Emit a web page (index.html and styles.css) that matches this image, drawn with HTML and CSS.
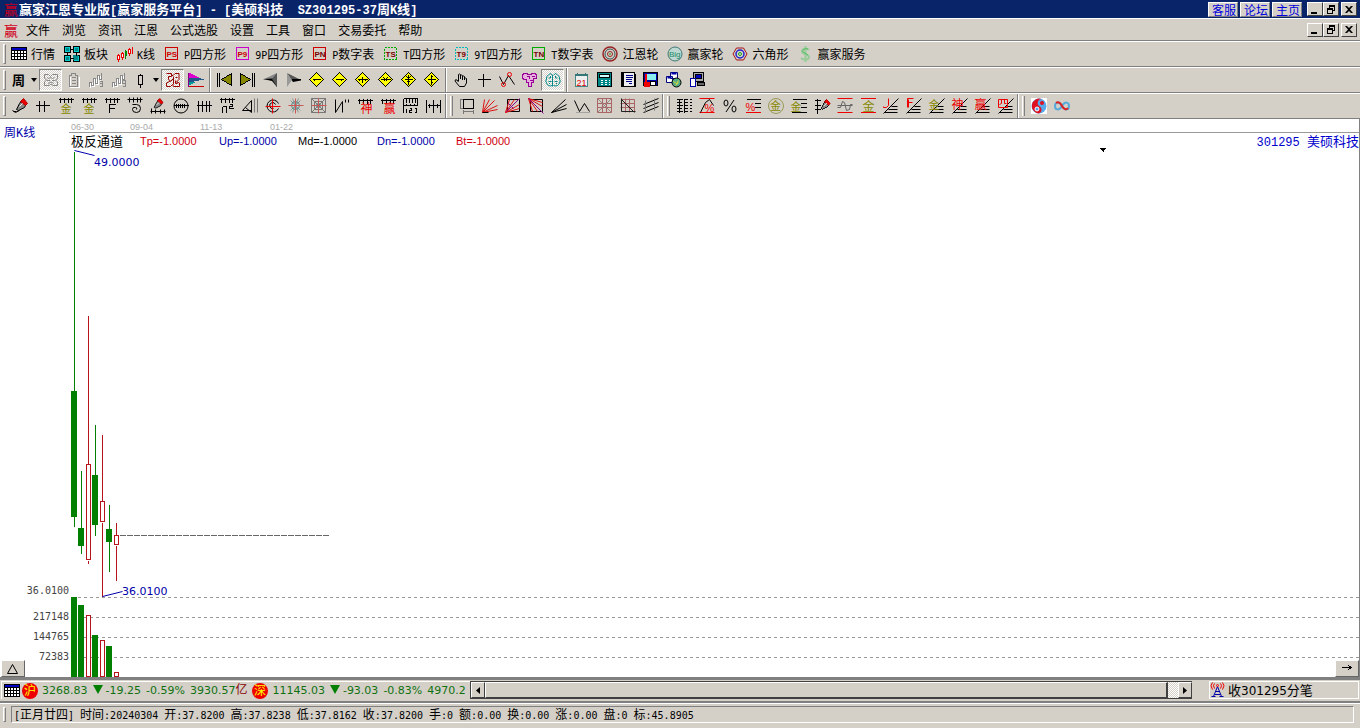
FILE: index.html
```
<!DOCTYPE html>
<html lang="zh-CN">
<head>
<meta charset="utf-8">
<title>赢家江恩专业版</title>
<link rel="stylesheet" href="styles.css">
</head>
<body>
<svg class="defs" aria-hidden="true">
  <symbol id="dia" viewBox="-.5 -.5 16 16"><path d="M7 0L14 7L7 14L0 7Z" fill="#ff0" stroke="#000"/></symbol>
  <symbol id="min" viewBox="0 0 12 11"><path d="M2 8h6v2H2z" fill="#000" stroke="none"/></symbol>
  <symbol id="res" viewBox="0 0 12 11"><path d="M4 1h6v2H4zM4 3h1v1H4zM9 3h1v4H7V6h2zM2 4h6v2H2zM2 6h1v4H2zM7 6h1v4H7zM2 9h6v1H2z" fill="#000" stroke="none"/></symbol>
  <symbol id="cls" viewBox="0 0 12 11"><path d="M2 2h2l2 2 2-2h2L7 5.500l3 3.500H8L6 7 4 9H2l3-3.500z" fill="#000" stroke="none"/></symbol>
  <symbol id="grid" viewBox="0 0 16 16"><path d="M0 1h16v13H0z" fill="#000" stroke="none"/><path d="M1 2h14v2H1z" fill="#0000c0" stroke="none"/><path d="M1 5h2v2H1zM4 5h2v2H4zM7 5h2v2H7zM10 5h2v2h-2zM13 5h2v2h-2zM1 8h2v2H1zM4 8h2v2H4zM7 8h2v2H7zM10 8h2v2h-2zM13 8h2v2h-2zM1 11h2v2H1zM4 11h2v2H4zM7 11h2v2H7zM10 11h2v2h-2zM13 11h2v2h-2z" fill="#fff" stroke="none"/></symbol>
  <symbol id="fan" viewBox="-.5 -.5 16 16"><path d="M0 15L15 0M1 14h13M5 11h9M8 8h6" stroke="#000"/></symbol>
  <symbol id="comb" viewBox="-.5 -.5 16 16"><path d="M0 3h15M2 1v5M6 1v5M10 1v5M13 1v5" stroke="#000"/></symbol>
  <symbol id="pen" viewBox="-.5 -.5 16 16"><path d="M7 5L10 1L14 5L12 9L6 12L4 11Z" fill="#888" stroke="#000"/><path d="M8 3L11 0L15 5L13 7Z" fill="#e00" stroke="#a00"/><path d="M7 8l3-3" stroke="#eee"/></symbol>
</svg>

<header class="title">
  <svg class="i" viewBox="0 0 16 16"><text class="ct" x="1" y="14" font-size="14" fill="#c00020">赢</text></svg>
  <h1>赢家江恩专业版<span class="tm">[</span>赢家服务平台<span class="tm">] - [</span>美硕科技<span class="tm">&nbsp; SZ301295-37</span>周<span class="tm">K</span>线<span class="tm">]</span></h1>
  <nav class="links"><a href="#">客服</a><a href="#">论坛</a><a href="#">主页</a></nav>
  <div class="wins"><button aria-label="最小化"><svg><use href="#min"/></svg></button><button aria-label="还原"><svg><use href="#res"/></svg></button><button class="close" aria-label="关闭"><svg><use href="#cls"/></svg></button></div>
</header>

<nav class="menu">
  <svg class="i" viewBox="0 0 16 16"><text class="ct" x="1" y="14" font-size="14" fill="#d00020">赢</text></svg>
  <button>文件</button><button>浏览</button><button>资讯</button><button>江恩</button><button>公式选股</button><button>设置</button><button>工具</button><button>窗口</button><button>交易委托</button><button>帮助</button>
  <div class="wins"><button aria-label="最小化"><svg><use href="#min"/></svg></button><button aria-label="还原"><svg><use href="#res"/></svg></button><button class="close" aria-label="关闭"><svg><use href="#cls"/></svg></button></div>
</nav>

<div class="bar labelled">
  <i class="grip"></i>
  <button><svg class="i"><use href="#grid"/></svg>行情</button>
  <button><svg class="i" viewBox="-.5 -.5 16 16"><path d="M0 0h6v6H0zM9 0h6v6H9zM0 9h6v6H0zM9 9h6v6H9z" fill="#0cc"/><path d="M2 2h2v2H2zM11 2h2v2h-2zM2 11h2v2H2zM9 9h4v4H9z" fill="#088" stroke="#088"/><path d="M6 3h3M3 6v3M12 6v3M6 12h3"/></svg>板块</button>
  <button><svg class="i" viewBox="-.5 -.5 16 16"><path d="M1 7v8M5 5v8M12 1v8M15 0v7" stroke="#e00"/><path d="M0 9h2v4H0zM4 7h2v4H4zM11 3h2v4h-2z" fill="#fff" stroke="#e00"/><path d="M8 3v9M8 5h1v4H8z" fill="#080" stroke="#080"/></svg><span><span class="m">K</span>线</span></button>
  <button><svg class="i" viewBox="-.5 -.5 16 16"><path d="M1 1h12v12H1z" stroke="#c00"/><text class="it" x="2" y="10">PS</text></svg><span><span class="m">P</span>四方形</span></button>
  <button><svg class="i" viewBox="-.5 -.5 16 16"><path d="M1 1h12v12H1z" stroke="#c0c"/><text class="it" x="2" y="10" fill="#a00050">P9</text></svg><span><span class="m">9P</span>四方形</span></button>
  <button><svg class="i" viewBox="-.5 -.5 16 16"><path d="M1 1h12v12H1z" stroke="#c00"/><text class="it dark" x="2" y="10">PN</text></svg><span><span class="m">P</span>数字表</span></button>
  <button><svg class="i" viewBox="-.5 -.5 16 16"><path d="M1 1h12v12H1z" stroke="#0a0" stroke-dasharray="2 1"/><text class="it dark" x="2" y="10">TS</text></svg><span><span class="m">T</span>四方形</span></button>
  <button><svg class="i" viewBox="-.5 -.5 16 16"><path d="M1 1h12v12H1z" stroke="#0bb" stroke-dasharray="2 1"/><text class="it dark" x="2" y="10">T9</text></svg><span><span class="m">9T</span>四方形</span></button>
  <button><svg class="i" viewBox="-.5 -.5 16 16"><path d="M1 1h12v12H1z" stroke="#0a0"/><text class="it dark" x="2" y="10">TN</text></svg><span><span class="m">T</span>数字表</span></button>
  <button><svg class="i s" viewBox="0 0 16 16"><circle cx="8" cy="8" r="7" stroke="#922" stroke-width="1.500"/><circle cx="8" cy="8" r="5" stroke="#355"/><circle cx="8" cy="8" r="2.500" stroke="#922"/><circle cx="8" cy="8" r="1" fill="#4a4" stroke="none"/></svg>江恩轮</button>
  <button><svg class="i s" viewBox="0 0 16 16"><circle cx="8" cy="8" r="7" stroke="#477" fill="#bcd8d0"/><text x="2" y="11" font-size="8" fill="#286" font-family="Liberation Sans">Big</text></svg>赢家轮</button>
  <button><svg class="i s" viewBox="0 0 16 16"><path d="M1 8L4.500 2h7L15 8l-3.500 6h-7z" stroke="#a11"/><circle cx="8" cy="8" r="4" stroke="#22c" stroke-width="1.500"/><circle cx="8" cy="8" r="1.500" stroke="#2a2"/></svg>六角形</button>
  <button><svg class="i s" viewBox="0 0 16 16"><path d="M12 4C9 1 5 3 5 5.500C5 9 12 7.500 12 11C12 14 7 14.500 4 12M8.500 0v16" stroke="#9c9" stroke-width="2"/><path d="M11 3C8 2 5 4 6 6L11 9" stroke="#5b6"/></svg>赢家服务</button>
</div>

<div class="bar">
  <i class="grip"></i>
  <button class="w21" aria-label="周"><svg class="i" viewBox="0 0 16 16"><text class="ct" x="1" y="13" font-size="13" font-weight="700" fill="#000">周</text></svg></button>
  <button class="dd" aria-label="周期"><svg viewBox="0 0 6 4"><path d="M0 0h6L3 4z"/></svg></button>
  <button class="on" aria-label="形态"><svg class="i s" viewBox="0 0 16 16"><path d="M1.500 2.500h4l2 2 2-2h5v4l-2 1.500 2 2v3.500h-4.500l-2-1.500-2 1.500h-4.500v-3.500l2-2-2-2zM4 5.500q2 2 3.500 0q2 2 4 0M4 8.500h3M9 8.500h3M5 11.500q3-3 6 0" stroke="#888"/></svg></button>
  <button aria-label="报告"><svg class="i" viewBox="-.5 -.5 16 16"><path d="M4 4v11h9V4" stroke="#fff"/><path d="M3 3h2V1h4v2h2v11H3zM5 5h4M5 8h4M5 11h4" stroke="#888"/></svg></button>
  <button aria-label="三浪"><svg class="i" viewBox="-.5 -.5 16 16"><path d="M1 15v-4h2v3h2V7h2v5h2V4h2v4" stroke="#fff"/><path d="M0 14v-4h2v3h2V6h2v5h2V3h2v4h2V0" stroke="#888"/><path d="M10 9h3v5h-3M10 11h3" stroke="#888"/></svg></button>
  <button aria-label="九浪"><svg class="i" viewBox="-.5 -.5 16 16"><path d="M1 15v-4h2v3h2V7h2v5h2V4h2v4" stroke="#fff"/><path d="M0 14v-4h2v3h2V6h2v5h2V3h2v4h2V0" stroke="#888"/><path d="M13 11h-3V8h3v6h-3" stroke="#888"/></svg></button>
  <button class="w20" aria-label="K线"><svg class="i" viewBox="-.5 -.5 16 16"><path d="M7 1v2M7 12v3M5 3h4v9H5z"/></svg></button>
  <button class="dd" aria-label="样式"><svg viewBox="0 0 6 4"><path d="M0 0h6L3 4z"/></svg></button>
  <button class="on" aria-label="图形"><svg class="i s" viewBox="0 0 16 16"><path d="M1.500 1.500h5v3h-3v3l2 1.500-4 2v3.500h4l2-2 1 2h6v-3.500l-3-1 2.500-2.500v-6h-4l-2 2h-2M5.500 9.500l3-3M8.500 4.500v8M10.500 5.500h2M10.500 8.500v3h2" stroke="#900"/></svg></button>
  <button aria-label="分布"><svg class="i" viewBox="-.5 -.5 16 16"><path d="M0 0L10 5H0z" fill="#d0c" stroke="none"/><path d="M0 5h10L15 7L0 10z" fill="#258" stroke="none"/><path d="M0 9h8l-8 4z" fill="#099" stroke="none"/><path d="M0 0v14" stroke="#808"/><path d="M0 14h15" stroke="#c00"/></svg></button>
  <i class="sep"></i>
  <button aria-label="最前"><svg class="i" viewBox="-.5 -.5 16 16"><path d="M0 0v14M2 0v14"/><path d="M14 1v12L4 7z" fill="#880"/></svg></button>
  <button aria-label="最后"><svg class="i" viewBox="-.5 -.5 16 16"><path d="M14 0v14M12 0v14"/><path d="M0 1v12L10 7z" fill="#880"/></svg></button>
  <button aria-label="后退"><svg class="i s" viewBox="0 0 16 16"><path d="M0 7.500L14 1v6z" fill="#888" stroke="none"/><path d="M0 7l10-.5 4 2V15L9 9z" fill="#000" stroke="none"/><path d="M9 7l5-6v14z" fill="#555" stroke="none"/></svg></button>
  <button aria-label="前进"><svg class="i s" viewBox="0 0 16 16"><path d="M1 1l13 6.500H5z" fill="#555" stroke="none"/><path d="M5 7l10 0v1.500L7 10z" fill="#000" stroke="none"/><path d="M1 1l5 7-5 7z" fill="#999" stroke="none"/></svg></button>
  <button aria-label="左移"><svg class="i" viewBox="-.5 -.5 16 16"><use href="#dia" x="-.5" y="-.5" width="16" height="16"/><path d="M3 7h8M5 6v2"/></svg></button>
  <button aria-label="右移"><svg class="i" viewBox="-.5 -.5 16 16"><use href="#dia" x="-.5" y="-.5" width="16" height="16"/><path d="M3 7h8M9 6v2"/></svg></button>
  <button aria-label="放宽"><svg class="i" viewBox="-.5 -.5 16 16"><use href="#dia" x="-.5" y="-.5" width="16" height="16"/><path d="M2 7h10M4 6v2M10 6v2M7 4v6"/></svg></button>
  <button aria-label="收窄"><svg class="i" viewBox="-.5 -.5 16 16"><use href="#dia" x="-.5" y="-.5" width="16" height="16"/><path d="M2 7h10M5 5l2 2-2 2M9 5L7 7l2 2"/></svg></button>
  <button aria-label="压缩"><svg class="i" viewBox="-.5 -.5 16 16"><use href="#dia" x="-.5" y="-.5" width="16" height="16"/><path d="M3 7h8M7 2v10M5 4l2 2 2-2M5 10l2-2 2 2"/></svg></button>
  <button aria-label="拉伸"><svg class="i" viewBox="-.5 -.5 16 16"><use href="#dia" x="-.5" y="-.5" width="16" height="16"/><path d="M3 7h8M7 2v10M6 4h2M6 10h2"/></svg></button>
  <i class="sep"></i>
  <button aria-label="拖动"><svg class="i s" viewBox="0 0 16 16"><path d="M5.500 9V2.500q1-1 2 0V7M7.500 7V3.500q1-1 2 0V8M9.500 8V4.500q1-1 2 0V8M11.500 8V6.500q1-1 2 0V11l-2 3.500H6.500L2 9q0-2 2-1l1.500 2"/></svg></button>
  <button aria-label="十字线"><svg class="i" viewBox="-.5 -.5 16 16"><path d="M7 1v13M1 7h13"/></svg></button>
  <button aria-label="折线"><svg class="i s" viewBox="-.5 -.5 16 16"><path d="M0 4l4 8 5-9 6 9"/><circle cx="4" cy="12" r="2" stroke="#e00"/><circle cx="10" cy="2" r="2" stroke="#e00"/></svg></button>
  <button aria-label="标记"><svg class="i" viewBox="-.5 -.5 16 16"><path d="M1 1h4v1h4V1h4v1h1v4h-3v4H9v4H6v-4H4V7H1V6H0V2h1zM4 4h3v2M9 4h3M7 8h3" fill="#e8b0dc" stroke="#909"/></svg></button>
  <button class="on" aria-label="大脑"><svg class="i s" viewBox="0 0 16 16"><path d="M7.500 3v11.500M7.500 3Q5 0 3.500 3Q1 4 1.500 7Q0 9 1.500 11Q3 15 7.500 13.500M8.500 3Q11 0 12.500 3Q15 4 14.500 7Q16 9 14.500 11Q13 15 8.500 13.500M3.500 6h2V4M3.500 9.500h3M12.500 6h-2V4M9.500 9.500h3M4.500 12V11M11.500 12V11" stroke="#088"/></svg></button>
  <i class="sep"></i>
  <button aria-label="日历"><svg class="i" viewBox="-.5 -.5 16 16"><path d="M1 3h12v11H1z" fill="#eee" stroke="#488"/><path d="M1 2h12v1H1zM3 0v2M11 0v2" fill="#5aa" stroke="#377"/><text x="2" y="13" font-size="9" fill="#d00" font-family="Liberation Sans">21</text></svg></button>
  <button aria-label="计算器"><svg class="i" viewBox="-.5 -.5 16 16"><path d="M0 0h14v14H0z" fill="#088"/><path d="M2 2h10v3H2z" fill="#cff"/><path d="M3 8h2M7 8h2M11 8h1M3 10h2M7 10h2M11 10h1M3 12h2M7 12h2M11 12h1" stroke="#fff"/></svg></button>
  <button aria-label="笔记"><svg class="i" viewBox="-.5 -.5 16 16"><path d="M1 0h13v14H1z" fill="#eee"/><path d="M2 0v14M14 1v13" stroke-width="2"/><path d="M5 3h7M5 5h7M5 7h6M5 9h6M8 11h3" stroke="#008"/></svg></button>
  <button aria-label="保存"><svg class="i" viewBox="-.5 -.5 16 16"><path d="M0 0h14v13H0z" fill="#00a"/><path d="M3 1h9v6H3z" fill="#8ee" stroke="none"/><path d="M0 9h6v5H0zM1 1h2v8H1z" fill="#e00" stroke="none"/><path d="M7 9h5v4H7z" fill="#fff"/></svg></button>
  <button aria-label="网络"><svg class="i s" viewBox="-.5 -.5 16 16"><path d="M4 0h7v6H4zM0 4h6v6H0z" fill="#fff" stroke="#007"/><path d="M5 1h5M1 5h4" stroke="#00a" stroke-width="2"/><circle cx="10" cy="10" r="4.500" fill="#5a8"/><path d="M7 9l3 2 2-3M9 13l3-3" stroke="#dd3"/></svg></button>
  <button aria-label="打印"><svg class="i" viewBox="-.5 -.5 16 16"><path d="M4 0h10v9H4z" fill="#aaa"/><path d="M6 2h6v4H6z" fill="#00b"/><path d="M1 6h5v8H1z" fill="#fff" stroke="#00a"/><path d="M8 10h7v3H8z" fill="#666"/></svg></button>
</div>

<div class="bar">
  <i class="grip"></i>
  <button aria-label="画笔"><svg class="i s" viewBox="-.5 -.5 16 16"><use href="#pen" x="-.5" y="-.5" width="16" height="16"/><path d="M0 12l3 2 4-2M1 13h3"/></svg></button>
  <button aria-label="刻度"><svg class="i" viewBox="-.5 -.5 16 16"><path d="M0 7h14M4 2v11M9 2v11"/></svg></button>
  <button aria-label="黄金一"><svg class="i" viewBox="-.5 -.5 16 16"><use href="#comb" x="-.5" y="-2.500" width="16" height="16"/><text class="ct" x="2" y="14" font-size="11" fill="#880">金</text></svg></button>
  <button aria-label="黄金二"><svg class="i" viewBox="-.5 -.5 16 16"><use href="#comb" x="-.5" y="-2.500" width="16" height="16"/><text class="ct" x="2" y="14" font-size="11" fill="#880">金</text></svg></button>
  <button aria-label="斐波"><svg class="i" viewBox="-.5 -.5 16 16"><use href="#comb" x="-.5" y="-2.500" width="16" height="16"/><path d="M5 14V6h6M5 10h5"/></svg></button>
  <button aria-label="螺旋"><svg class="i s" viewBox="-.5 -.5 16 16"><use href="#comb" x="-.5" y="-2.500" width="16" height="16"/><path d="M5 6h4q4 0 4 4t-4 4q-4 0-4-3t3-2q2 0 1 2"/></svg></button>
  <button aria-label="画笔刻度"><svg class="i s" viewBox="-.5 -.5 16 16"><use href="#pen" x="0" y="-.5" width="13" height="13"/><path d="M0 13h15M1 10v5M5 11v4M10 11v4M14 11v4"/></svg></button>
  <button aria-label="圆刻度"><svg class="i s" viewBox="-.5 -.5 16 16"><circle cx="7.500" cy="7.500" r="7"/><path d="M0 7h15M3 5v4M5 5v4M7 5v4M9 5v4M11 5v4" shape-rendering="crispEdges"/></svg></button>
  <button aria-label="等距"><svg class="i" viewBox="-.5 -.5 16 16"><path d="M0 7h15M2 2v11M6 2v11M10 2v11M13 2v11"/></svg></button>
  <button aria-label="平方"><svg class="i" viewBox="-.5 -.5 16 16"><use href="#comb" x="-.5" y="-2.500" width="16" height="16"/><path d="M3 14V8M3 8h4v6M10 6h3v2h-3v2h4"/></svg></button>
  <button aria-label="三角"><svg class="i s" viewBox="-.5 -.5 16 16"><path d="M0 12L9 2v12M0 12h9M3 9l6 5"/><path d="M12 0v14M15 0v14" stroke="#777"/></svg></button>
  <button aria-label="圆心"><svg class="i s" viewBox="-.5 -.5 16 16"><path d="M13 5a6 6 0 1 0 0 5M10 6a3 3 0 1 0-2 4"/><path d="M7 0v15M0 8h15" stroke="#e00"/></svg></button>
  <button aria-label="星网"><svg class="i s" viewBox="-.5 -.5 16 16"><path d="M2 2l10 10M12 2L2 12M4 0l6 14M10 0L4 14" stroke="#899"/><circle cx="7" cy="7" r="4" stroke="#588"/><path d="M7 0v15M0 7h15" stroke="#c55"/></svg></button>
  <button aria-label="方网"><svg class="i s" viewBox="-.5 -.5 16 16"><path d="M0 0h14v14H0zM3 3h8v8H3zM0 0l14 14M14 0L0 14" stroke="#777"/><circle cx="7" cy="7" r="2" stroke="#588"/><path d="M7 0v15M0 7h15" stroke="#c55"/></svg></button>
  <button aria-label="波段"><svg class="i s" viewBox="-.5 -.5 16 16"><path d="M1 1v13M1 14L8 3v11M11 1v3M14 1v3"/></svg></button>
  <button aria-label="神刻度"><svg class="i" viewBox="-.5 -.5 16 16"><use href="#comb" x="-.5" y="-1.500" width="16" height="16"/><text class="ct" x="3" y="14" font-size="12" fill="#e00">神</text></svg></button>
  <button aria-label="赢刻度"><svg class="i" viewBox="-.5 -.5 16 16"><use href="#comb" x="-.5" y="-1.500" width="16" height="16"/><text class="ct" x="3" y="14" font-size="12" fill="#e00">赢</text></svg></button>
  <button aria-label="尺"><svg class="i" viewBox="-.5 -.5 16 16"><path d="M0 0h14M0 0v14M14 0v7M0 7h14M3 0v4M6 0v4M9 0v4M12 0v4M3 7v-2M7 7v-2M11 7v-2M3 10v4M6 10h2v2H6v2h2M11 10h2v4h-2"/></svg></button>
  <button aria-label="跨度"><svg class="i" viewBox="-.5 -.5 16 16"><path d="M0 1v13M7 1v13M14 1v13M1 7h12M3 5v4M11 5v4"/></svg></button>
  <i class="div"></i>
  <button aria-label="方框"><svg class="i" viewBox="-.5 -.5 16 16"><path d="M4 1h10v9H4z"/><path d="M1 1v9M0 1h3M0 10h3M4 13h10M4 11v4M14 11v4" stroke="#777"/></svg></button>
  <button aria-label="扇形"><svg class="i s" viewBox="-.5 -.5 16 16"><path d="M0 14L2 1M0 14L7 1M0 14L12 2M0 14L15 7M0 14L15 11" stroke="#d11"/><path d="M0 14h6"/></svg></button>
  <button aria-label="扇形框"><svg class="i s" viewBox="-.5 -.5 16 16"><path d="M2 1h12v12H2z"/><path d="M0 14L4 1M0 14L9 1M0 14L14 6M0 14L14 10" stroke="#d11"/><path d="M1 13L14 0M3 5l5 5" stroke="#808"/></svg></button>
  <button aria-label="下扇形"><svg class="i s" viewBox="-.5 -.5 16 16"><path d="M2 1h12v12H2z"/><path d="M0 0l4 13M0 0l9 13M0 0l14 8M0 0l14 4" stroke="#d11"/><path d="M0 0l15 15" stroke="#808"/></svg></button>
  <button aria-label="角度线"><svg class="i s" viewBox="-.5 -.5 16 16"><path d="M0 14L14 1M0 14L15 6M0 14L15 10"/></svg></button>
  <button aria-label="波浪"><svg class="i s" viewBox="-.5 -.5 16 16"><path d="M0 2l5 11 5-8 5 8"/><path d="M2 14h13" stroke="#777" stroke-dasharray="1 1"/></svg></button>
  <button aria-label="网格一"><svg class="i s" viewBox="-.5 -.5 16 16"><path d="M0 0h14v14H0zM5 0v14M9 0v14M0 5h14M0 9h14" stroke="#a66"/><path d="M0 0l14 14M14 0L0 14" stroke="#998888"/></svg></button>
  <button aria-label="网格二"><svg class="i s" viewBox="-.5 -.5 16 16"><path d="M1 1h13v12H1zM5 0v14M9 0v14M0 5h14M0 9h14" stroke="#a66"/><path d="M1 0v13h14M1 1l13 13" stroke="#222"/></svg></button>
  <button aria-label="平行线"><svg class="i s" viewBox="-.5 -.5 16 16"><path d="M0 6L15 0M0 10L15 4M0 14L15 8"/><path d="M2 2v12M11 0v12" stroke="#777"/></svg></button>
  <i class="div"></i>
  <button aria-label="等分"><svg class="i" viewBox="-.5 -.5 16 16"><path d="M3 0v14M8 0v14M0 1h6M0 4h5M0 7h6M0 10h5M0 13h6M8 1h3M8 4h3M8 7h3M8 10h3M8 13h3M13 1h2M13 4h2M13 7h2M13 10h2M13 13h2"/></svg></button>
  <button aria-label="波幅"><svg class="i s" viewBox="-.5 -.5 16 16"><path d="M0 0h15M0 14h15" stroke="#e00"/><path d="M1 14L6 4l4-3 4 6"/><text x="5" y="13" font-size="11" fill="#e00" font-family="Liberation Sans">%</text></svg></button>
  <button aria-label="百分比"><svg class="i s" viewBox="0 0 16 16"><path d="M12 2L4 14"/><ellipse cx="4" cy="5" rx="2" ry="3"/><ellipse cx="12" cy="11" rx="2" ry="3"/></svg></button>
  <button aria-label="百分线"><svg class="i" viewBox="-.5 -.5 16 16"><path d="M1 1h14M9 5h6M9 9h6"/><path d="M0 14h15" stroke="#e00"/><text x="0" y="12" font-size="11" fill="#e00" font-family="Liberation Sans">%</text></svg></button>
  <button aria-label="金圆"><svg class="i s" viewBox="0 0 16 16"><circle cx="8" cy="8" r="7.500" stroke="#995"/><text class="ct" x="2" y="12" font-size="11" fill="#880">金</text></svg></button>
  <button aria-label="金线"><svg class="i" viewBox="-.5 -.5 16 16"><path d="M1 1h14M9 5h6M9 9h6M0 14h15"/><text class="ct" x="-1" y="12" font-size="11" fill="#880">金</text></svg></button>
  <button aria-label="竖尺"><svg class="i" viewBox="-.5 -.5 16 16"><path d="M3 0v15M0 2h6M0 7h6M0 11h6"/><use href="#pen" x="3" y="0" width="13" height="14"/></svg></button>
  <button aria-label="波动带"><svg class="i s" viewBox="-.5 -.5 16 16"><path d="M0 0h15M0 14h15" stroke="#e00"/><path d="M0 9h3l2-6 2 1 2 8 3-1 1-5h2M0 7h15" stroke="#666"/></svg></button>
  <button aria-label="金带"><svg class="i" viewBox="-.5 -.5 16 16"><path d="M0 0h15M0 14h15" stroke="#e00"/><text class="ct" x="2" y="12" font-size="12" fill="#880">金</text></svg></button>
  <button aria-label="J线"><svg class="i s" viewBox="-.5 -.5 16 16"><use href="#fan" x="-.5" y="-.5" width="16" height="16"/><path d="M5 0v7l-2 2H0V8" stroke="#e00"/></svg></button>
  <button aria-label="F线"><svg class="i s" viewBox="-.5 -.5 16 16"><use href="#fan" x="-.5" y="-.5" width="16" height="16"/><path d="M1 9V0h6M1 4h5M2 1v8" stroke="#e00"/></svg></button>
  <button aria-label="金角"><svg class="i s" viewBox="-.5 -.5 16 16"><use href="#fan" x="-.5" y="-.5" width="16" height="16"/><text class="ct" x="-1" y="10" font-size="11" fill="#880">金</text></svg></button>
  <button aria-label="神角"><svg class="i s" viewBox="-.5 -.5 16 16"><use href="#fan" x="-.5" y="-.5" width="16" height="16"/><text class="ct" x="-1" y="10" font-size="12" fill="#e00">神</text></svg></button>
  <button aria-label="赢角"><svg class="i s" viewBox="-.5 -.5 16 16"><use href="#fan" x="-.5" y="-.5" width="16" height="16"/><text class="ct" x="-1" y="10" font-size="12" fill="#e00">赢</text></svg></button>
  <button aria-label="四角"><svg class="i s" viewBox="-.5 -.5 16 16"><use href="#fan" x="-.5" y="-.5" width="16" height="16"/><path d="M0 1h9v8H0zM3 1v4L1 6M6 1v4h2" stroke="#e00"/></svg></button>
  <i class="div"></i>
  <button aria-label="太极"><svg class="i s" viewBox="0 0 16 16"><path d="M0 0h16v16H0z" fill="#fff" stroke="none"/><circle cx="8" cy="8" r="7.500" fill="#5ae" stroke="none"/><path d="M11 1A7.500 7.500 0 1 0 8 15.500A4 4 0 0 0 8 8A4 4 0 0 1 11 1z" fill="#e01020" stroke="none"/><circle cx="11" cy="5" r="2" fill="#e01020" stroke="none"/><circle cx="6" cy="11" r="2" fill="#5ae" stroke="#fff"/></svg></button>
  <button aria-label="无限"><svg class="i s" viewBox="0 0 16 16"><path d="M8 8C5 3 1 4 1 8s4 5 7 0 7-4 7 0-4 5-7 0" stroke="#5ad" stroke-width="2"/><path d="M2 5c3-2 5 1 6 3s4 5 6 2" stroke="#d22" stroke-width="2"/></svg></button>
</div>

<main class="chart">
  <section class="price">
    <div class="side"><span class="period">周<span class="m12">K</span>线</span><span class="m low">36.0100</span></div>
    <div class="plot">
      <div class="dates"><span>06-30</span><span>09-04</span><span>11-13</span><span>01-22</span></div>
      <div class="legend"><span class="name">极反通道</span><span class="red">Tp=-1.0000</span><span class="blue">Up=-1.0000</span><span>Md=-1.0000</span><span class="blue">Dn=-1.0000</span><span class="red">Bt=-1.0000</span><span class="stock"><span class="m12">301295&nbsp;</span>美硕科技</span></div>
      <svg class="draw">
        <g class="g"><path d="M5 3v375M12 322v83M26 276v111M40 356v67"/><path class="f" d="M2 243h6v126H2zM9 380h6v18H9zM23 327h6v50h-6zM37 381h6v13h-6z"/></g>
        <g class="r"><path d="M19 167v149M19 412v3M33 286v67M33 374v75M47 374v13M47 397v35"/><path class="o" d="M17 316h4v95h-4zM31 353h4v20h-4zM45 387h4v9h-4z"/></g>
        <path class="last" d="M50 387h210"/>
        <path class="lead" d="M5 2l20 5M33 448l20-5"/>
        <text x="25" y="18">49.0000</text><text x="53" y="447">36.0100</text>
        <path class="tri" d="M1030 -1h7l-3 4h-1z"/>
      </svg>
    </div>
  </section>
  <section class="volume">
    <div class="side m"><span>217148</span><span>144765</span><span>72383</span></div>
    <svg class="draw">
      <g class="grid"><line x1="2" y1="0" x2="100%" y2="0"/><line x1="2" y1="20" x2="100%" y2="20"/><line x1="2" y1="40" x2="100%" y2="40"/><line x1="2" y1="60" x2="100%" y2="60"/></g>
      <path class="f" d="M2 0h6v80H2zM9 8h6v72H9zM23 38h6v42h-6zM37 49h6v31h-6z"/>
      <g class="r"><path class="o" d="M17 18h4v61h-4zM31 43h4v36h-4zM45 75h4v4h-4z"/></g>
    </svg>
  </section>
  <button class="corner left" aria-label="展开"><svg class="i s" viewBox="-.5 -.5 16 16"><path d="M7 3L2 12h10z"/></svg></button>
  <button class="corner right" aria-label="向右"><svg class="i" viewBox="-.5 -.5 16 16"><path d="M2 6h10M9 4l3 2-3 2"/></svg></button>
</main>

<div class="quotes">
  <div class="index">
    <svg class="i"><use href="#grid"/></svg>
    <svg class="i s badge first" viewBox="0 0 16 16"><circle cx="8" cy="8" r="8" fill="#e00" stroke="none"/><text class="ct" x="2" y="12" font-size="12" fill="#ff0">沪</text></svg>
    <span>3268.83</span><span><svg class="down" viewBox="0 0 10 9"><path d="M0 0h10L5 9z"/></svg>-19.25</span><span>-0.59%</span><span>3930.57<b>亿</b></span>
    <svg class="i s badge" viewBox="0 0 16 16"><circle cx="8" cy="8" r="8" fill="#e00" stroke="none"/><text class="ct" x="2" y="12" font-size="12" fill="#ff0">深</text></svg>
    <span>11145.03</span><span><svg class="down" viewBox="0 0 10 9"><path d="M0 0h10L5 9z"/></svg>-93.03</span><span>-0.83%</span><span>4970.2</span>
  </div>
  <div class="scroll"><button aria-label="向左滚动"><svg viewBox="0 0 4 7"><path d="M4 0v7L0 3.500z"/></svg></button><div class="thumb"></div><button aria-label="向右滚动"><svg viewBox="0 0 4 7"><path d="M0 0v7l4-3.500z"/></svg></button></div>
  <div class="feed"><svg class="i s" viewBox="-.5 -.5 16 16"><path d="M7 4L3 14M7 4l4 10M5 9h4M4 12h6M1 14h4M9 14h4" stroke="#00a"/><path d="M4 1q-2 2 0 5M10 1q2 2 0 5M2 0q-3 3 0 7M12 0q3 3 0 7" stroke="#e00"/><circle cx="7" cy="3" r="1" stroke="#e00"/></svg><span>收<span class="v">301295</span>分笔</span></div>
</div>

<footer class="status">
  <i class="grip"></i>
  <p><span><b>[</b>正月廿四<b>]</b></span> <span>时间<b>:20240304</b></span> <span>开<b>:37.8200</b></span> <span>高<b>:37.8238</b></span> <span>低<b>:37.8162</b></span> <span>收<b>:37.8200</b></span> <span>手<b>:0</b></span> <span>额<b>:0.00</b></span> <span>换<b>:0.00</b></span> <span>涨<b>:0.00</b></span> <span>盘<b>:0</b></span> <span>标<b>:45.8905</b></span></p>
</footer>
</body>
</html>
```
FILE: styles.css
```
* { box-sizing: border-box; }
body {
  margin: 0;
  height: 100vh;
  display: flex;
  flex-direction: column;
  background: #d4d0c8;
  color: #000;
  font: 12px/16px "Noto Sans CJK SC", sans-serif;
  overflow: hidden;
}
button {
  padding: 0;
  border: 0;
  background: none;
  color: inherit;
  font: inherit;
}
.defs { position: absolute; width: 0; height: 0; }
.i {
  flex: none;
  width: 16px;
  height: 16px;
  fill: none;
  stroke: #000;
  shape-rendering: crispEdges;
  overflow: visible;
}
.i.s { shape-rendering: auto; }
.i text { stroke: none; }
.ct { font-family: "Noto Sans CJK SC", sans-serif; }
.it { fill: #c00; font: bold 8px "Liberation Sans", sans-serif; }
.it.dark { fill: #700; }
.m { font-family: "DejaVu Sans Mono", monospace; font-size: 10px; line-height: 0; }
.m12, .tm { font-family: "Liberation Mono", monospace; font-size: 12px; line-height: 0; }
.red { color: #d00010; }
.blue { color: #0000a8; }

.title {
  display: flex;
  align-items: center;
  height: 18px;
  padding: 0 3px;
  background: #0a246a;
  color: #fff;
}
.title h1 {
  flex: 1;
  margin: 0;
  font-size: 13px;
  line-height: 18px;
  font-weight: 700;
  white-space: nowrap;
}
.links { display: flex; gap: 2px; margin-right: 5px; }
.links a {
  width: 30px;
  height: 15px;
  padding-left: 3px;
  background: #d4d0c8;
  border: 1px solid;
  border-color: #fff #808080 #808080 #fff;
  color: #00d;
  line-height: 13px;
  text-decoration: none;
  white-space: nowrap;
}
.wins { display: flex; }
.wins button {
  width: 16px;
  height: 14px;
  background: #d4d0c8;
  border: 1px solid;
  border-color: #fff #404040 #404040 #fff;
}
.wins svg { display: block; width: 12px; height: 11px; margin-left: 1px; }
.wins .close { margin-left: 2px; }

.menu {
  display: flex;
  align-items: center;
  gap: 12px;
  height: 23px;
  padding: 0 3px;
  border-top: 1px solid #fff;
  border-bottom: 1px solid #808080;
}
.menu .i { margin-right: -5px; }
.menu .wins { margin-left: auto; }

.bar {
  display: flex;
  align-items: center;
  height: 26px;
  border-top: 1px solid #fff;
  border-bottom: 1px solid #808080;
}
.bar button {
  display: flex;
  align-items: center;
  justify-content: center;
  width: 23px;
  height: 22px;
}
.bar .w21 { width: 21px; }
.bar .w20 { width: 20px; }
.bar .dd { width: 10px; }
.dd svg { width: 6px; height: 4px; }
.bar .on {
  border: 1px solid;
  border-color: #808080 #fff #fff #808080;
  background: repeating-conic-gradient(#fff 0 25%, #d4d0c8 0 50%) 0 0 / 2px 2px;
}
.labelled { gap: 9px; white-space: nowrap; }
.bar.labelled button { width: auto; gap: 4px; }
.grip {
  flex: none;
  width: 3px;
  height: 20px;
  margin: 0 2px 0 3px;
  border: 1px solid;
  border-color: #fff #808080 #808080 #fff;
}
.labelled .grip { margin-right: -4px; }
.sep {
  width: 2px;
  height: 24px;
  margin: 0 2px;
  border-left: 1px solid #808080;
  border-right: 1px solid #fff;
}
.div {
  width: 10px;
  height: 24px;
  border-left: 1px solid #808080;
  background: linear-gradient(#fff, #fff) 0 0 / 1px 100% no-repeat,
    linear-gradient(#fff, #fff) 4px 2px / 1px 20px no-repeat,
    linear-gradient(#808080, #808080) 6px 2px / 1px 20px no-repeat;
}

.chart {
  position: relative;
  flex: 1;
  display: flex;
  flex-direction: column;
  min-height: 0;
  background: #fff;
  border-right: 1px solid #808080;
}
.price { flex: 1; display: flex; min-height: 0; }
.side {
  flex: none;
  display: flex;
  flex-direction: column;
  width: 69px;
  color: #444;
  text-align: right;
}
.period { padding: 5px 0 0 4px; color: #00a; text-align: left; }
.low { margin-top: auto; line-height: 12px; }
.plot { flex: 1; display: flex; flex-direction: column; min-width: 0; }
.dates {
  display: flex;
  height: 14px;
  padding-left: 2px;
  border-bottom: 1px solid #999;
  color: #aaa;
  font: 9px/16px "Liberation Sans", sans-serif;
}
.dates span { width: 59px; }
.dates span:nth-child(2), .dates span:nth-child(3) { width: 70px; }
.legend {
  display: flex;
  height: 15px;
  padding-left: 2px;
  font: 11px/16px "Liberation Sans", sans-serif;
}
.legend > span { width: 79px; white-space: nowrap; }
.legend .name { width: 69px; font: 13px/15px "Noto Sans CJK SC", sans-serif; }
.legend .stock {
  width: auto;
  margin-left: auto;
  color: #00c;
  font: 13px/15px "Noto Sans CJK SC", sans-serif;
}
.draw {
  flex: 1;
  width: 100%;
  min-height: 0;
  fill: none;
  overflow: visible;
  shape-rendering: crispEdges;
}
.draw path, .draw line { transform: translate(.5px, .5px); }
.draw .f { fill: #007f00; stroke: none; transform: none; }
.draw .g { stroke: #007f00; }
.draw .r { stroke: #b8141c; }
.draw .o { fill: #fff; }
.draw .last { stroke: #666; stroke-dasharray: 6 1; }
.draw .lead { stroke: #00a; shape-rendering: auto; }
.draw .tri { fill: #000; }
.draw .grid { stroke: #999; stroke-dasharray: 3 3; }
.draw text { fill: #00a; font: 11px "DejaVu Sans", sans-serif; }
.volume { display: flex; height: 80px; }
.volume .side { padding-top: 10px; line-height: 20px; }
.corner {
  position: absolute;
  bottom: 0;
  display: flex;
  justify-content: center;
  align-items: center;
  width: 24px;
  height: 17px;
  background: #d4d0c8;
  border: 1px solid;
  border-color: #fff #666 #666 #fff;
}
.corner.left { left: 1px; }
.corner.right { right: 0; }

.quotes {
  display: flex;
  height: 26px;
  padding: 1px 1px 2px;
  border-top: 3px solid #808080;
  border-bottom: 2px solid #808080;
}
.index {
  display: flex;
  align-items: center;
  gap: 5px;
  width: 469px;
  padding-left: 2px;
  border-top: 1px solid #fff;
  border-left: 1px solid #fff;
  color: #107010;
  font: 11px/18px "DejaVu Sans", sans-serif;
  white-space: nowrap;
  overflow: hidden;
}
.index .badge { margin-right: -1px; }
.index .first { margin-left: -3px; }
.index b { color: #800; font: 12px/0 "Noto Sans CJK SC", sans-serif; }
.down { width: 10px; height: 9px; margin-right: 3px; fill: #007f00; }
.scroll {
  flex: 1;
  display: flex;
  margin-right: 17px;
  border: 1px solid #404040;
  border-right: 0;
  background: repeating-conic-gradient(#fff 0 25%, #d4d0c8 0 50%) 0 0 / 2px 2px;
}
.scroll button {
  display: flex;
  align-items: center;
  justify-content: center;
  width: 14px;
  background: #d4d0c8;
  border: 1px solid;
  border-color: #fff #404040 #404040 #fff;
}
.scroll button svg { width: 4px; height: 7px; }
.thumb {
  flex: 1;
  margin-right: 10px;
  background: #d4d0c8;
  border: 1px solid;
  border-color: #fff #404040 #404040 #fff;
  border-right-width: 2px;
}
.feed {
  display: flex;
  align-items: center;
  gap: 2px;
  width: 150px;
  border: 1px solid #fff;
  font-size: 13px;
}
.v { font: 12px/0 "DejaVu Sans", sans-serif; }

.status {
  display: flex;
  align-items: center;
  height: 25px;
  padding-bottom: 4px;
  border-top: 1px solid #fff;
}
.status .grip { height: 15px; }
.status p {
  flex: 1;
  height: 17px;
  margin: 0 6px 0 3px;
  padding-left: 2px;
  border: 1px solid;
  border-color: #808080 #fff #fff #808080;
  line-height: 14px;
  display: flex;
  gap: 6px;
  white-space: nowrap;
}
.status b { font: 10px/0 "DejaVu Sans Mono", monospace; }
```
